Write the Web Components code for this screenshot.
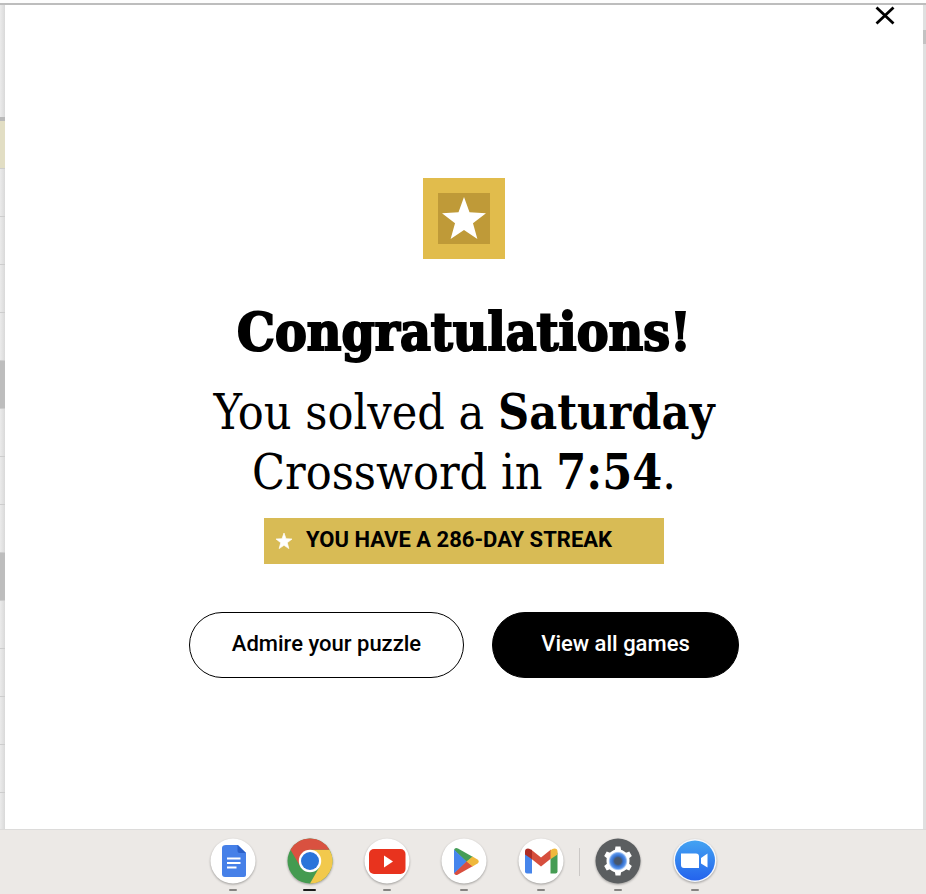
<!DOCTYPE html>
<html lang="en">
<head>
<meta charset="utf-8">
<meta name="viewport" content="width=device-width, initial-scale=1">
<title>Crossword</title>
<style>
html, body { margin: 0; background: #fdfdfd; }
</style>
</head>
<body>
<game-screen>
  <board-edge slot="left"></board-edge>
  <congrats-dialog>
    <star-badge slot="badge"></star-badge>
    <span slot="title">Congratulations!</span>
    <span slot="summary">You solved a <b>Saturday</b><br>Crossword in <b>7:54</b>.</span>
    <streak-banner slot="streak">YOU HAVE A 286-DAY STREAK</streak-banner>
    <pill-button slot="actions">Admire your puzzle</pill-button>
    <pill-button slot="actions" solid>View all games</pill-button>
  </congrats-dialog>
  <page-edge slot="right"></page-edge>
  <app-shelf slot="shelf"></app-shelf>
</game-screen>

<script>
const define = (name, html, setup) => customElements.define(name, class extends HTMLElement {
  constructor() {
    super();
    const t = document.createElement('template');
    t.innerHTML = html;
    this.attachShadow({ mode: 'open' }).append(t.content.cloneNode(true));
    if (setup) setup(this);
  }
});
const STAR = 'M12 0 L15 8.5 24 9 16.9 14.6 19.3 23.4 12 18.4 4.7 23.4 7.1 14.6 0 9 9 8.5Z';

define('game-screen', `
<style>
:host { display: flex; flex-direction: column; min-height: 100vh; font-family: Roboto, "Liberation Sans", sans-serif; color: #000; }
main { flex: 1; display: grid; grid-template-columns: 5px 1fr 3px; margin-top: 3px; border-top: 2px solid #bdbdbd; }
</style>
<main><slot name="left"></slot><slot></slot><slot name="right"></slot></main>
<slot name="shelf"></slot>`);

define('board-edge', `
<style>
:host { display: flex; flex-direction: column; background: linear-gradient(90deg, #ebebeb, #d9d9d9); }
i { height: 47px; border-bottom: 1px solid #cdcdcd; flex: none; }
.head { height: 112px; border-bottom: 4px solid #b9b9b9; }
.active { background: #e2dec4; }
.block { background: #bdbdbd; }
.last { flex: 1; border-bottom: 0; }
</style>
<i class="head"></i><i class="active"></i><i></i><i></i><i></i><i></i><i class="block"></i><i></i><i></i><i></i><i class="block"></i><i></i><i></i><i></i><i></i><i class="last"></i>`);

define('page-edge', `
<style>
:host { display: block; background: #e0e0e0; padding-top: 25px; }
i { display: block; height: 14px; background: #c2c2c2; }
</style><i></i>`);

define('congrats-dialog', `
<style>
:host { display: flex; flex-direction: column; align-items: center; background: #fff; text-align: center; }
header { align-self: stretch; display: flex; justify-content: flex-end; padding-right: 27px; }
button { width: 22px; height: 22px; padding: 0; border: 0; background: none; cursor: pointer; display: block; }
svg { display: block; }
section { display: flex; flex-direction: column; align-items: center; padding: 151px 20px 20px; width: 100%; box-sizing: border-box; }
h1 { margin: 36px 0 0; font: 700 53px/72px "DejaVu Serif Condensed", "DejaVu Serif", serif; -webkit-text-stroke: 2px #000; }
p { margin: 15px 0 16px; font: 400 48px/60px "DejaVu Serif Condensed", "DejaVu Serif", serif; }
.actions { display: grid; grid-template-columns: 275fr 247fr; gap: 28px; width: 100%; max-width: 550px; margin-top: 48px; }
</style>
<header><button aria-label="Close"><svg width="22" height="22" viewBox="0 0 22 22"><path d="M2.500 2.500 19.500 18.500M19.500 2.500 2.500 18.500" stroke="#000" stroke-width="2.8" fill="none"/></svg></button></header>
<section>
<slot name="badge"></slot>
<h1><slot name="title"></slot></h1>
<p><slot name="summary"></slot></p>
<slot name="streak"></slot>
<div class="actions"><slot name="actions"></slot></div>
</section>`);

define('star-badge', `
<style>
:host { display: block; background: #e1bc4c; padding: 15px; }
div { background: #bf9a38; padding: 4px; }
svg { display: block; }
</style>
<div><svg width="44" height="43" viewBox="0 0 24 24" preserveAspectRatio="none"><path fill="#fff" d="${STAR}"/></svg></div>`);

define('streak-banner', `
<style>
:host { display: flex; align-items: center; box-sizing: border-box; width: 100%; max-width: 400px; min-height: 46px; padding: 0 12px; gap: 14px; background: #d8bb55; font-size: 22px; font-weight: 700; line-height: 44px; }
svg { flex: none; }
span { padding-bottom: 2px; }
</style>
<svg width="16" height="18" viewBox="0 0 24 24"><path fill="#fff" stroke="#fff" d="${STAR}"/></svg><span><slot></slot></span>`);

define('pill-button', `
<style>
:host { display: block; }
button { display: block; width: 100%; min-height: 66px; padding: 0 12px 2px; border: 1px solid #000; border-radius: 33px; background: #fff; color: #000; font: 500 22px/28px Roboto, "Liberation Sans", sans-serif; cursor: pointer; }
:host([solid]) button { background: #000; color: #fff; }
</style>
<button><slot></slot></button>`);

define('app-icon', `
<style>
:host { display: flex; flex-direction: column; align-items: center; width: 48px; gap: 4px; }
button { display: block; width: 48px; height: 48px; padding: 0; border: 0; background: none; cursor: pointer; filter: drop-shadow(0 1px 1px #0005); }
i { width: 8px; height: 2px; border-radius: 1px; background: #858381; }
:host([current]) i { width: 13px; background: #1c1c1c; }
</style>
<button></button><i></i>`);

const disc = '<circle cx="24" cy="24" r="22.5" fill="#fff"/>';
const tooth = 'M20.5 15 21.500 9.500h5l1 5.500v18l-1 5.500h-5l-1-5.500Z';
const apps = [
  ['Docs', disc + '<path fill="#4680e8" d="M17 8h12l8 8v22q0 2-2 2H16q-3 0-3-3V11q0-3 4-3Z"/><path fill="#2a5fc8" d="M28.500 8 37 16h-6.500q-2 0-2-2Z"/><path d="M18 21.500h13.500M18 26h13.500M18 30.500h9.500" stroke="#fff" stroke-width="2"/>'],
  ['Chrome', '<circle cx="24" cy="24" r="22.500" fill="#449b50"/><path fill="#f2c94c" d="M24 12.750H43.500A22.500 22.500 0 0 1 24 46.500L33.740 29.600Z"/><path fill="#d95140" d="M24 24 14.260 29.600 4.500 12.750A22.500 22.500 0 0 1 43.500 12.750H24Z"/><circle cx="24" cy="24" r="11.200" fill="#fff"/><circle cx="24" cy="24" r="9" fill="#2a74da"/>'],
  ['YouTube', disc + '<rect x="6" y="12" width="36.500" height="25" rx="5" fill="#e8331e"/><path fill="#fff" d="M21 18.500 30 24.500 21 30.500Z"/>'],
  ['Play Store', disc + '<path fill="#459d57" d="M14 13Q15 10 18 11.500L33 20 26.500 25Z"/><path fill="#d94f3f" d="M14 36Q15 39 18 37.500L33 29 26.500 24Z"/><path fill="#4585ed" d="M14 12.500 26.500 24.500 14 36.500Z"/><path fill="#efb83c" d="M32.500 19.500 37.500 22.500Q40 24.500 37.500 26.500L32.500 29.500 26.500 24.500Z"/>'],
  ['Gmail', disc + '<path fill="#4685eb" d="M8 15.500 15 20V36.500H10Q8 36.500 8 34.500Z"/><path fill="#459c53" d="M40.500 15.500 33.500 20V36.500h5q2 0 2-2Z"/><path fill="#d64e3d" d="M14 12.500 24 20.500 34 12.500V21.500L24 29.500 14 21.500Z"/><path fill="#ad2c25" d="M8 17.500V14.500Q8 11.500 11 11.500 13 11.500 15 13.300V22.300Z"/><path fill="#efb83c" d="M40.500 17.500V14.500q0-3-3-3-2 0-4 1.800v9Z"/>'],
  null,
  ['Settings', '<radialGradient id="g"><stop offset=".35" stop-color="#47566b"/><stop offset=".55" stop-color="#3570ce"/><stop offset=".8" stop-color="#5792e8"/><stop offset="1" stop-color="#e8f1ff"/></radialGradient><circle cx="24" cy="24" r="22.500" fill="#5b5e60"/><g fill="#fff"><circle cx="24" cy="24" r="11.500"/>' + [0, 60, 120].map(a => `<path transform="rotate(${a} 24 24)" d="${tooth}"/>`).join('') + '</g><circle cx="24" cy="24" r="9.500" fill="url(#g)"/>'],
  ['Zoom', '<linearGradient id="z" x2="0" y2="1"><stop stop-color="#43a3f2"/><stop offset="1" stop-color="#2463ed"/></linearGradient><circle cx="24" cy="23.500" r="21.500" fill="#f5f8fd"/><circle cx="24" cy="23.500" r="20" fill="url(#z)"/><path fill="#fff" d="M10 16.500h15q3 0 3 3V31H13q-3 0-3-3ZM30 21 36.500 16.500V30.500L30 26.500Z"/>']
];

define('app-shelf', `
<style>
:host { display: flex; justify-content: center; box-sizing: border-box; min-height: 65px; padding: 7px 0 0 1px; background: #ece9e6; border-top: 1px solid #dcdbda; }
nav { display: flex; gap: 29px; }
.rule { width: 1px; height: 28px; margin: 11px -15px 0; background: #cbc8c6; }
</style>
<nav aria-label="Apps"></nav>`, el => {
  const nav = el.shadowRoot.querySelector('nav');
  for (const app of apps) {
    if (!app) {
      const rule = document.createElement('span');
      rule.className = 'rule';
      nav.append(rule);
      continue;
    }
    const icon = document.createElement('app-icon');
    if (app[0] === 'Chrome') icon.setAttribute('current', '');
    const button = icon.shadowRoot.querySelector('button');
    button.setAttribute('aria-label', app[0]);
    button.innerHTML = '<svg width="48" height="48" viewBox="0 0 48 48">' + app[1] + '</svg>';
    nav.append(icon);
  }
});
</script>
</body>
</html>
